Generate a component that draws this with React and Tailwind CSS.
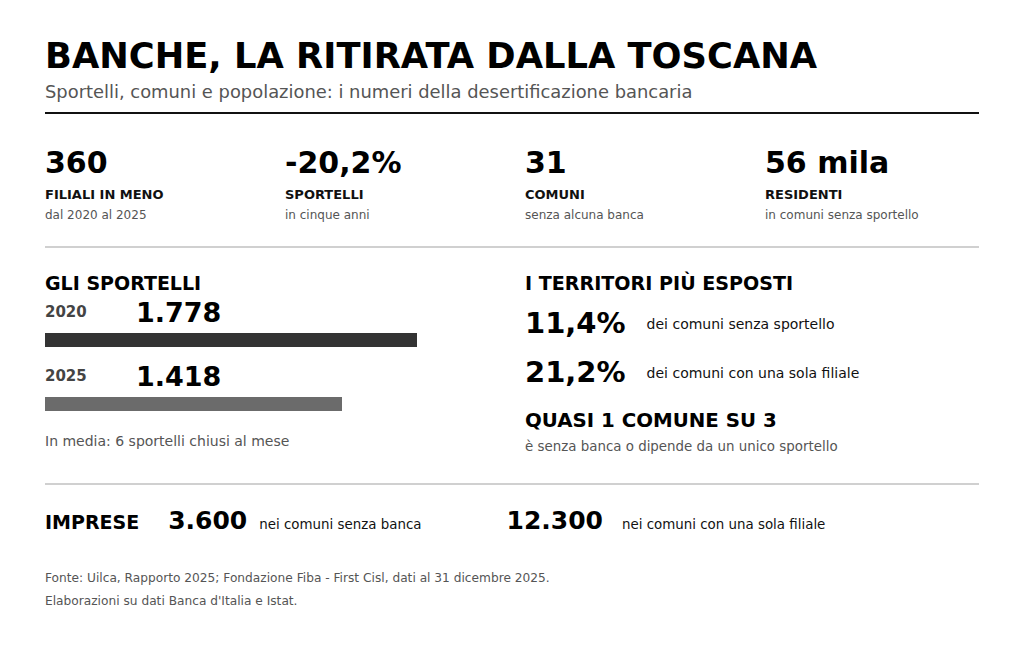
import React from "react";

const font = { fontFamily: '"DejaVu Sans", Verdana, sans-serif' };

function Stat({ value, label, sub }) {
  return (
    <div className="w-[240px] shrink-0">
      <div className="text-[30px] leading-none font-bold text-black">{value}</div>
      <div className="mt-[10px] text-[13px] leading-none font-bold text-[#111]">{label}</div>
      <div className="mt-[8px] text-[12px] leading-none text-[#555]">{sub}</div>
    </div>
  );
}

function BarRow({ year, value, width, color, first }) {
  return (
    <div className={first ? "mt-[6px]" : "mt-[16px]"}>
      <div className="flex items-center">
        <div className="w-[91px] text-[15px] leading-none font-bold text-[#444]">{year}</div>
        <div className="text-[27px] leading-none font-bold text-black">{value}</div>
      </div>
      <div className={`mt-[7px] h-[14px] ${color}`} style={{ width }} />
    </div>
  );
}

function PctRow({ value, text, className }) {
  return (
    <div className={`flex items-center ${className}`}>
      <div className="text-[29px] leading-none font-bold text-black">{value}</div>
      <div className="ml-[21px] text-[14px] leading-none text-[#111]">{text}</div>
    </div>
  );
}

export default function App() {
  return (
    <div className="w-[1024px] h-[672px] bg-white px-[45px] pt-[38px]" style={font}>
      <h1 className="text-[35.3px] leading-none font-bold text-black">BANCHE, LA RITIRATA DALLA TOSCANA</h1>
      <p className="mt-[10px] text-[17.9px] leading-none text-[#555]">
        Sportelli, comuni e popolazione: i numeri della desertificazione bancaria
      </p>
      <div className="mt-[11px] h-[2px] bg-[#111]" />

      <div className="mt-[34px] flex">
        <Stat value="360" label="FILIALI IN MENO" sub="dal 2020 al 2025" />
        <Stat value="-20,2%" label="SPORTELLI" sub="in cinque anni" />
        <Stat value="31" label="COMUNI" sub="senza alcuna banca" />
        <Stat value="56 mila" label="RESIDENTI" sub="in comuni senza sportello" />
      </div>

      <div className="mt-[25px] h-[2px] bg-[#d0d0d0]" />

      <div className="mt-[26px] flex">
        <div className="w-[480px] shrink-0">
          <h2 className="text-[19px] leading-none font-bold text-black">GLI SPORTELLI</h2>
          <BarRow first year="2020" value="1.778" width={372} color="bg-[#333333]" />
          <BarRow year="2025" value="1.418" width={297} color="bg-[#6b6b6b]" />
          <p className="mt-[23px] text-[14px] leading-none text-[#555]">In media: 6 sportelli chiusi al mese</p>
        </div>
        <div className="flex-1">
          <h2 className="text-[19.1px] leading-none font-bold text-black">I TERRITORI PIÙ ESPOSTI</h2>
          <PctRow className="mt-[16px]" value="11,4%" text="dei comuni senza sportello" />
          <PctRow className="mt-[20px]" value="21,2%" text="dei comuni con una sola filiale" />
          <h3 className="mt-[24px] text-[19.8px] leading-none font-bold text-black">QUASI 1 COMUNE SU 3</h3>
          <p className="mt-[9px] text-[13.4px] leading-none text-[#555]">
            è senza banca o dipende da un unico sportello
          </p>
        </div>
      </div>

      <div className="mt-[29px] h-[2px] bg-[#d0d0d0]" />

      <div className="mt-[23px] flex items-baseline">
        <div className="text-[19px] leading-none font-bold text-black">IMPRESE</div>
        <div className="ml-[29px] text-[25px] leading-none font-bold text-black">3.600</div>
        <div className="ml-[12px] text-[13.4px] leading-none text-[#111]">nei comuni senza banca</div>
        <div className="ml-[85px] text-[25px] leading-none font-bold text-black">12.300</div>
        <div className="ml-[19px] text-[13.4px] leading-none text-[#111]">nei comuni con una sola filiale</div>
      </div>

      <div className="mt-[34px] text-[12.2px] leading-[23px] text-[#555]">
        <p>Fonte: Uilca, Rapporto 2025; Fondazione Fiba - First Cisl, dati al 31 dicembre 2025.</p>
        <p>Elaborazioni su dati Banca d'Italia e Istat.</p>
      </div>
    </div>
  );
}
